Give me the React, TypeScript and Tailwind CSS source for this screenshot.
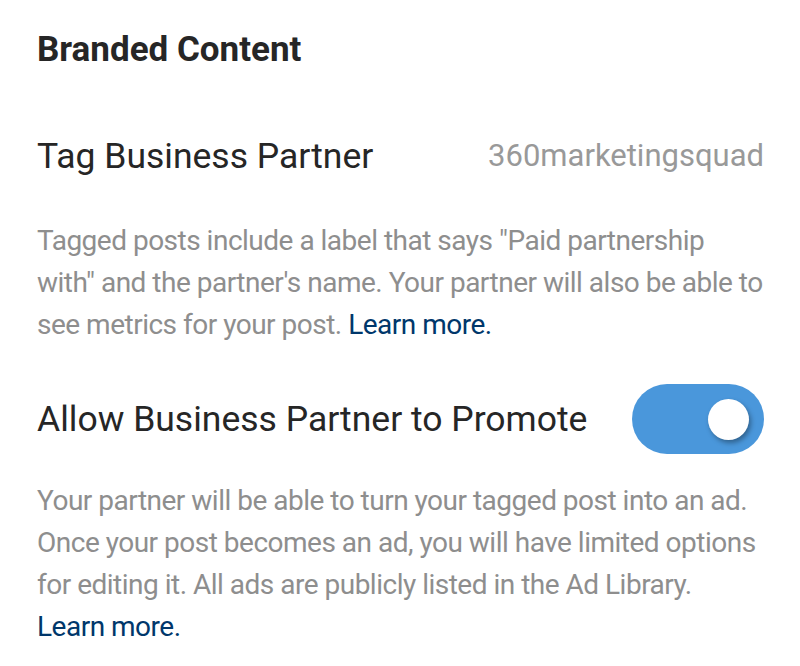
import React from "react";

export default function App() {
  return (
    <div className="w-[800px] h-[666px] bg-white overflow-hidden pl-[37px] pr-[36px] pt-[29px]" style={{ fontFamily: "Roboto, 'Noto Sans', sans-serif" }}>
      <h1 className="text-[35px] leading-[42px] font-bold text-[#262626]">Branded Content</h1>

      <div className="mt-[65px] flex items-center justify-between">
        <span className="text-[35.5px] leading-[40px] text-[#262626]">Tag Business Partner</span>
        <span className="text-[31px] leading-[40px] text-[#999999]">360marketingsquad</span>
      </div>

      <p className="mt-[44px] text-[28px] leading-[42px] text-[#8e8e8e] tracking-[-0.5px] whitespace-nowrap">
        Tagged posts include a label that says "Paid partnership
        <br />
        with" and the partner's name. Your partner will also be able to
        <br />
        see metrics for your post. <span className="text-[#00376b]">Learn more.</span>
      </p>

      <div className="mt-[38px] flex items-center justify-between">
        <span className="text-[35.5px] leading-[40px] text-[#262626]">Allow Business Partner to Promote</span>
        <div className="relative w-[132px] h-[70px] rounded-full bg-[#4a97db] shrink-0">
          <div className="absolute left-[76px] top-[15px] w-[41px] h-[41px] rounded-full bg-white shadow-[2px_3px_5px_rgba(0,0,0,0.35)]" />
        </div>
      </div>

      <p className="mt-[26px] text-[28px] leading-[42px] text-[#8e8e8e] tracking-[-0.5px] whitespace-nowrap">
        Your partner will be able to turn your tagged post into an ad.
        <br />
        Once your post becomes an ad, you will have limited options
        <br />
        for editing it. All ads are publicly listed in the Ad Library.
        <br />
        <span className="text-[#00376b]">Learn more.</span>
      </p>
    </div>
  );
}
